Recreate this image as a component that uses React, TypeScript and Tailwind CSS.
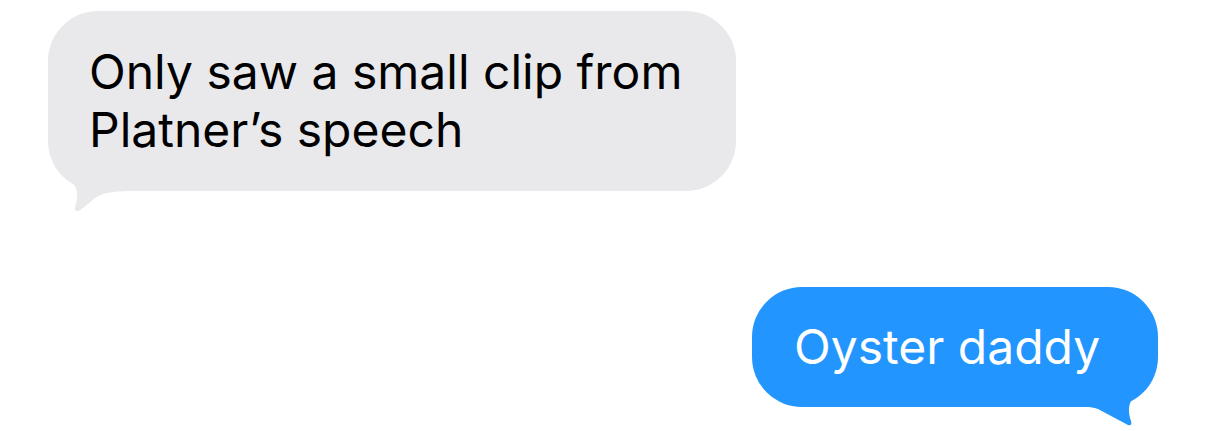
import React from 'react';

const font = { fontFamily: 'Inter, "Noto Sans", sans-serif' };

const GrayTail = () => (
  <svg
    className="absolute left-0 top-[119px]"
    width="90"
    height="85"
    viewBox="0 0 90 85"
  >
    <path
      d="M0 0 C1 22 10 42 24 52 C29 57 31 66 27 77 C26 80 28 82 31 81 C38 76 44 70 50 66 C58 62 70 61 86 61 L86 0 Z"
      fill="#e9e9eb"
    />
  </svg>
);

const BlueTail = () => (
  <svg
    className="absolute right-0 top-[53px]"
    width="80"
    height="90"
    viewBox="0 0 80 90"
  >
    <path
      d="M80 0 C80 30 72 46 58 55 C51 60 49 70 53 81 C54 84 53 86 50 85 C40 80 30 74 20 69 C17 68 14 67 10 67 L0 67 L0 0 Z"
      fill="#2295ff"
    />
  </svg>
);

const App = () => {
  return (
    <div className="w-[1206px] h-[431px] bg-white flex flex-col" style={font}>
      <div className="relative self-start ml-[48px] mt-[11px] w-[688px] h-[180px]">
        <GrayTail />
        <div className="relative w-full h-full bg-[#e9e9eb] rounded-[50px] pl-[41px] pt-[32px] text-[48px] leading-[58px] text-black">
          <div>Only saw a small clip from</div>
          <div>Platner’s speech</div>
        </div>
      </div>
      <div className="relative self-end mr-[48px] mt-[96px] w-[406px] h-[120px]">
        <BlueTail />
        <div className="relative w-full h-full bg-[#2295ff] rounded-[50px] pl-[42px] pt-[31px] text-[48px] leading-[58px] text-white">
          Oyster daddy
        </div>
      </div>
    </div>
  );
};

export default App;
